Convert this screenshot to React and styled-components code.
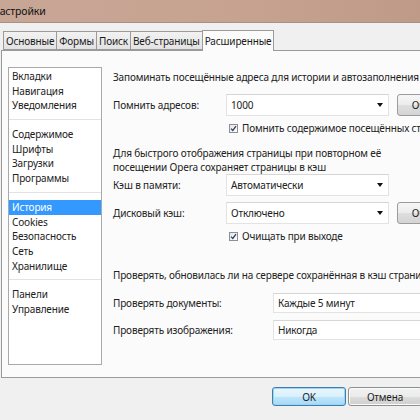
import React from 'react'
import styled, { createGlobalStyle } from 'styled-components'

const Global = createGlobalStyle`
  html, body { margin: 0; padding: 0; }
  body {
    width: 420px;
    height: 420px;
    overflow: hidden;
    background: #f0f0f0;
    font-family: "Noto Sans", "Open Sans", sans-serif;
    font-size: 10px;
    letter-spacing: -0.15px;
    color: #222;
  }
`

const Window = styled.div`
  width: 420px;
  height: 420px;
  overflow: hidden;
  display: flex;
  flex-direction: column;
  background: #f0f0f0;
`

const TitleBar = styled.div`
  height: 22px;
  flex: none;
  background: linear-gradient(90deg, #c8a696 0%, #c7a290 60%, #c09a88 100%);
  border-bottom: 1px solid #a98f84;
  display: flex;
  align-items: center;
  font-size: 10.5px;
  color: #101010;
  white-space: nowrap;
  margin-left: -8px;
`

const Body = styled.div`
  flex: 1;
  display: flex;
  flex-direction: column;
  padding: 8px 0 0 1px;
`

const Tabs = styled.div`
  display: flex;
  align-items: flex-end;
  padding-left: 2px;
  height: 19px;
  position: relative;
  z-index: 1;
`

const Tab = styled.div`
  height: ${p => (p.$active ? '20px' : '17px')};
  margin-bottom: ${p => (p.$active ? '-1px' : '0')};
  padding: 0 2px;
  display: flex;
  align-items: center;
  border: 1px solid #9a9a9a;
  border-bottom: ${p => (p.$active ? 'none' : '1px solid #9a9a9a')};
  margin-right: -1px;
  background: ${p => (p.$active ? '#fbfbfb' : 'linear-gradient(#f2f2f2, #e3e3e3)')};
  white-space: nowrap;
  color: #1a1a1a;
`

const Panel = styled.div`
  width: 440px;
  height: 328px;
  border: 1px solid #9a9a9a;
  background: #fbfbfb;
  display: flex;
  padding: 16px 0 0 6px;
  box-sizing: border-box;
`

const List = styled.div`
  width: 94px;
  height: 298px;
  flex: none;
  border: 1px solid #a9a9a9;
  background: #fff;
  box-sizing: border-box;
  padding: 1px 0 0 0;
`

const Item = styled.div`
  height: 14.7px;
  line-height: 14.7px;
  padding-left: 3px;
  background: ${p => (p.$selected ? '#3399ff' : 'transparent')};
  color: ${p => (p.$selected ? '#fff' : '#222')};
  white-space: nowrap;
`

const Sep = styled.div`
  height: 1px;
  background: #e2e2e2;
  margin: 6px 0 7px;
`

const Content = styled.div`
  flex: 1;
  padding: 3px 0 0 11px;
  display: flex;
  flex-direction: column;
  white-space: nowrap;
`

const Text = styled.div`
  line-height: ${p => p.$lh || 15}px;
  margin-top: ${p => p.$mt || 0}px;
`

const Row = styled.div`
  display: flex;
  align-items: center;
  height: ${p => p.$h || 22}px;
  margin-top: ${p => p.$mt || 0}px;
`

const Label = styled.div`
  width: ${p => p.$w || 113}px;
  flex: none;
`

const Combo = styled.div`
  width: ${p => p.$w || 163}px;
  height: 100%;
  flex: none;
  box-sizing: border-box;
  border: 1px solid #e3e3e3;
  border-top-color: #d6d6d6;
  background: #fff;
  display: flex;
  align-items: center;
  padding: 0 5px 0 4px;
`

const ComboText = styled.span`
  flex: 1;
`

const Arrow = styled.span`
  width: 0;
  height: 0;
  border-left: 3.5px solid transparent;
  border-right: 3.5px solid transparent;
  border-top: 4px solid #111;
`

const SideButton = styled.div`
  margin-left: 8px;
  width: 74px;
  height: 22px;
  flex: none;
  box-sizing: border-box;
  border: 1px solid #9a9b9b;
  border-radius: 3px;
  background: linear-gradient(#f6f6f6 0%, #ececec 50%, #dedede 51%, #d4d4d4 100%);
  display: flex;
  align-items: center;
  justify-content: center;
`

const Check = styled.label`
  display: flex;
  align-items: center;
  gap: 4px;
  height: 16px;
  margin-top: ${p => p.$mt || 0}px;
  padding-left: ${p => p.$indent || 0}px;
`

const Box = styled.span`
  width: 9px;
  height: 9px;
  box-sizing: border-box;
  border: 1px solid #8f8f8f;
  background: linear-gradient(135deg, #e6e6e6, #fdfdfd);
  display: flex;
  align-items: center;
  justify-content: center;
`

const Footer = styled.div`
  flex: none;
  height: 33px;
  display: flex;
  align-items: flex-start;
  padding: 9px 0 0 271px;
  gap: 2px;
`

const Button = styled.div`
  width: 74px;
  height: 19px;
  flex: none;
  box-sizing: border-box;
  border: 1px solid ${p => (p.$default ? '#3c7fb1' : '#8e8f8f')};
  border-radius: 3px;
  background: ${p =>
    p.$default
      ? 'linear-gradient(#eaf6fd 0%, #d9f0fc 50%, #bee6fd 51%, #a7d9f5 100%)'
      : 'linear-gradient(#f2f2f2 0%, #ebebeb 50%, #dddddd 51%, #cfcfcf 100%)'};
  box-shadow: ${p => (p.$default ? 'inset 0 0 0 1px #9fd4f0' : 'inset 0 0 0 1px #fafafa')};
  display: flex;
  align-items: center;
  justify-content: center;
  color: #1e1e1e;
`

const Desk = styled.div`
  flex: 1;
  background: linear-gradient(90deg, #4a4845 0%, #3a3836 30%, #6b6966 33%, #3b3a38 40%, #2c2b2a 100%);
`

const CheckMark = () => (
  <svg width="7" height="7" viewBox="0 0 7 7">
    <path d="M1 3.6 L2.8 5.4 L6 1.2" fill="none" stroke="#2a3d6e" strokeWidth="1.3" />
  </svg>
)

const Checkbox = ({ children, indent, mt }) => (
  <Check $indent={indent} $mt={mt}>
    <Box>
      <CheckMark />
    </Box>
    {children}
  </Check>
)

const Select = ({ value, w }) => (
  <Combo $w={w}>
    <ComboText>{value}</ComboText>
    <Arrow />
  </Combo>
)

const groups = [
  ['Вкладки', 'Навигация', 'Уведомления'],
  ['Содержимое', 'Шрифты', 'Загрузки', 'Программы'],
  ['История', 'Cookies', 'Безопасность', 'Сеть', 'Хранилище'],
  ['Панели', 'Управление'],
]

const tabs = ['Основные', 'Формы', 'Поиск', 'Веб-страницы', 'Расширенные']

export default function App() {
  return (
    <Window>
      <Global />
      <TitleBar>Настройки</TitleBar>
      <Body>
        <Tabs>
          {tabs.map(t => (
            <Tab key={t} $active={t === 'Расширенные'}>
              {t}
            </Tab>
          ))}
        </Tabs>
        <Panel>
          <List>
            {groups.map((g, i) => (
              <React.Fragment key={i}>
                {i > 0 && <Sep />}
                {g.map(item => (
                  <Item key={item} $selected={item === 'История'}>
                    {item}
                  </Item>
                ))}
              </React.Fragment>
            ))}
          </List>
          <Content>
            <Text>Запоминать посещённые адреса для истории и автозаполнения</Text>
            <Row $mt={9}>
              <Label>Помнить адресов:</Label>
              <Select value="1000" />
              <SideButton>Очистить</SideButton>
            </Row>
            <Checkbox indent={116} mt={4}>
              Помнить содержимое посещённых страниц
            </Checkbox>
            <Text $mt={10} $lh={14}>Для быстрого отображения страницы при повторном её</Text>
            <Text $lh={14}>посещении Opera сохраняет страницы в кэш</Text>
            <Row>
              <Label>Кэш в памяти:</Label>
              <Select value="Автоматически" />
            </Row>
            <Row $mt={6}>
              <Label>Дисковый кэш:</Label>
              <Select value="Отключено" />
              <SideButton>Очистить</SideButton>
            </Row>
            <Checkbox indent={116} mt={4}>
              Очищать при выходе
            </Checkbox>
            <Text $mt={24}>Проверять, обновилась ли на сервере сохранённая в кэш страница</Text>
            <Row $mt={10} $h={20}>
              <Label $w={160}>Проверять документы:</Label>
              <Select value="Каждые 5 минут" w={160} />
            </Row>
            <Row $mt={7} $h={20}>
              <Label $w={160}>Проверять изображения:</Label>
              <Select value="Никогда" w={160} />
            </Row>
          </Content>
        </Panel>
        <Footer>
          <Button $default>OK</Button>
          <Button>Отмена</Button>
        </Footer>
        <Desk />
      </Body>
    </Window>
  )
}
